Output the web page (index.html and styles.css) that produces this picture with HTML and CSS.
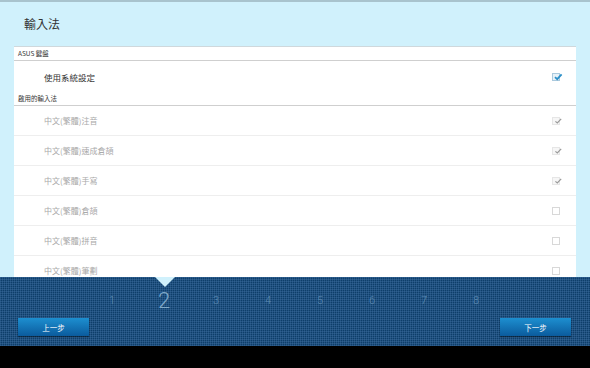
FILE: index.html
```html
<!DOCTYPE html>
<html lang="zh-Hant">
<head>
<meta charset="utf-8">
<link rel="stylesheet" href="styles.css">
</head>
<body>
<div class="screen">
  <div class="content">
    <div class="title">輸入法</div>
    <div class="panel">
      <div class="section">ASUS 鍵盤</div>
      <div class="row main">
        <span class="label">使用系統設定</span>
        <span class="cb on"><svg viewBox="0 0 10 10"><path d="M2 5.2 L4.2 7.2 L8.6 2.4" fill="none" stroke="#2b8fc8" stroke-width="1.8"/></svg></span>
      </div>
      <div class="section sec2">啟用的輸入法</div>
      <div class="row"><span class="label">中文(繁體)注音</span><span class="cb dis"><svg viewBox="0 0 10 10"><path d="M2.4 5.4 L4.3 7 L8.2 2.8" fill="none" stroke="#999" stroke-width="1.2"/></svg></span></div>
      <div class="row"><span class="label">中文(繁體)速成倉頡</span><span class="cb dis"><svg viewBox="0 0 10 10"><path d="M2.4 5.4 L4.3 7 L8.2 2.8" fill="none" stroke="#999" stroke-width="1.2"/></svg></span></div>
      <div class="row"><span class="label">中文(繁體)手寫</span><span class="cb dis"><svg viewBox="0 0 10 10"><path d="M2.4 5.4 L4.3 7 L8.2 2.8" fill="none" stroke="#999" stroke-width="1.2"/></svg></span></div>
      <div class="row"><span class="label">中文(繁體)倉頡</span><span class="cb empty"></span></div>
      <div class="row"><span class="label">中文(繁體)拼音</span><span class="cb empty"></span></div>
      <div class="row"><span class="label">中文(繁體)筆劃</span><span class="cb empty"></span></div>
    </div>
  </div>
  <div class="stepper">
    <div class="notch"></div>
    <div class="steps">
      <span class="step">1</span>
      <span class="step cur">2</span>
      <span class="step">3</span>
      <span class="step">4</span>
      <span class="step">5</span>
      <span class="step">6</span>
      <span class="step">7</span>
      <span class="step">8</span>
    </div>
    <div class="buttons">
      <button class="btn">上一步</button>
      <button class="btn">下一步</button>
    </div>
  </div>
  <div class="navbar"></div>
</div>
</body>
</html>
```
FILE: styles.css
```css
html, body {
  margin: 0;
  padding: 0;
  background: #000;
}
body {
  font-family: "Noto Sans CJK TC", "Noto Sans", "Liberation Sans", sans-serif;
}
.screen {
  width: 590px;
  height: 368px;
  display: flex;
  flex-direction: column;
  overflow: hidden;
}
.content {
  height: 275px;
  background: #d0f1fc;
  border-top: 2px solid #a8c3cd;
  display: flex;
  flex-direction: column;
}
.title {
  height: 44px;
  line-height: 43px;
  padding-left: 24px;
  font-size: 12px;
  color: #333;
}
.panel {
  margin: 0 14px;
  flex: 1;
  background: #fff;
  overflow: hidden;
  border-top: 1px solid #cfd8dc;
}
.section {
  height: 13px;
  line-height: 13px;
  padding-left: 4px;
  font-size: 6.5px;
  color: #333;
  border-bottom: 1px solid #cfcfcf;
}
.row {
  height: 29px;
  border-bottom: 1px solid #eeeeee;
  display: flex;
  align-items: center;
  justify-content: space-between;
  padding: 0 16px 0 30px;
}
.row.main {
  height: 31px;
  border-bottom: none;
}
.label {
  font-size: 8px;
  color: #a9a9a9;
}
.row.main .label {
  font-size: 8.5px;
  color: #333;
}
.cb {
  width: 8px;
  height: 8px;
  box-sizing: border-box;
  display: block;
  position: relative;
}
.cb svg {
  width: 10px;
  height: 10px;
  position: absolute;
  left: 0;
  top: -2px;
}
.cb.on {
  border: 1px solid #aac9dd;
  background: #e6f1f8;
}
.cb.dis {
  border: 1px solid #e6e6e6;
  background: #f6f6f6;
}
.cb.empty {
  border: 1px solid #d8d8d8;
}
.stepper {
  height: 69px;
  position: relative;
  background-color: #0e3e6a;
  background-image:
    repeating-linear-gradient(90deg, rgba(70,120,170,0.35) 0 1px, transparent 1px 2px),
    repeating-linear-gradient(0deg, rgba(70,120,170,0.35) 0 1px, transparent 1px 2px);
}
.notch {
  position: absolute;
  left: 155px;
  top: 0;
  width: 0;
  height: 0;
  border-left: 10px solid transparent;
  border-right: 10px solid transparent;
  border-top: 10px solid #d0f1fc;
}
.steps {
  display: flex;
  padding-left: 86px;
  height: 41px;
  padding-top: 6px;
  box-sizing: border-box;
  align-items: center;
}
.step {
  width: 52px;
  text-align: center;
  font-family: "Roboto", "Liberation Sans", sans-serif;
  font-weight: 300;
  font-size: 11px;
  color: #5f8db4;
}
.step.cur {
  font-size: 22px;
  color: #7fa9c9;
}
.buttons {
  display: flex;
  justify-content: space-between;
  padding: 0 19px 0 18px;
}
.btn {
  width: 71px;
  height: 18px;
  border: none;
  padding: 0;
  background: linear-gradient(#1d8fd0, #0b5b9d);
  color: #fff;
  font-family: "Noto Sans CJK TC", sans-serif;
  font-size: 7.5px;
  box-shadow: 0 1px 1px rgba(0,0,0,0.4);
}
.navbar {
  flex: 1;
  background: #000;
}
```
